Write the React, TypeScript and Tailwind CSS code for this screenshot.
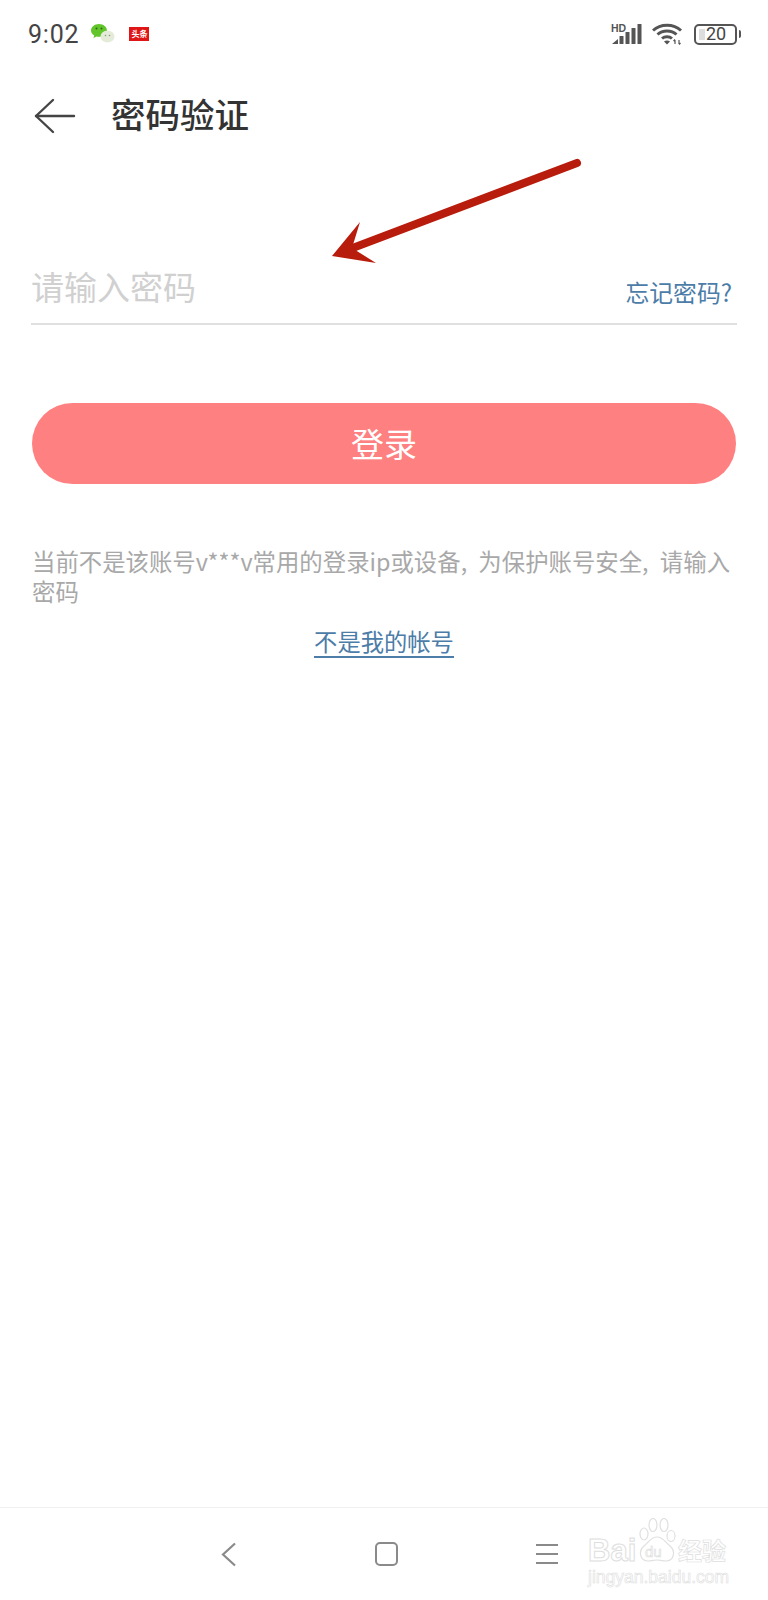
import React from 'react';

const cjk = 'font-["Noto_Sans_CJK_SC","Noto_Sans",sans-serif]';

const StatusBar = () => (
  <div className="flex h-[68px] items-center pl-[28px] pr-[27px]">
    <span className="text-[25px] leading-none text-[#444] font-['Roboto',sans-serif] tracking-[0.8px]">9:02</span>
    <svg className="ml-[12px]" width="24" height="22" viewBox="0 0 24 22">
      <path d="M8 1c4.400 0 8 2.900 8 6.400S12.400 13.800 8 13.800c-.9 0-1.700-.1-2.500-.3L2.500 15l.7-2.700C1.200 11.100 0 9.400 0 7.400 0 3.900 3.600 1 8 1z" fill="#63c52c" />
      <ellipse cx="16.500" cy="13.500" rx="7" ry="6" fill="#e4ecd9" />
      <circle cx="5.500" cy="5.500" r="1" fill="#2c6a10" />
      <circle cx="10.500" cy="5.500" r="1" fill="#2c6a10" />
      <circle cx="14.500" cy="12.500" r="0.800" fill="#8a9a80" />
      <circle cx="18.500" cy="12.500" r="0.800" fill="#8a9a80" />
    </svg>
    <span className={`ml-[14px] flex h-[14px] w-[20px] items-center justify-center bg-[#e01515] text-[8px] font-bold leading-none text-white ${cjk}`}>
      头条
    </span>
    <div className="ml-auto flex items-center">
      <svg width="31" height="22" viewBox="0 0 31 22">
        <text x="0" y="9" fontSize="10.500" fontWeight="700" fill="#555" fontFamily="Liberation Sans, sans-serif">HD</text>
        <path d="M1 21l6-5v5z" fill="#555" />
        <rect x="8.500" y="13" width="4" height="8" rx="0.500" fill="#555" />
        <rect x="14.500" y="9" width="4" height="12" rx="0.500" fill="#555" />
        <rect x="20.500" y="5" width="4" height="16" rx="0.500" fill="#555" />
        <rect x="26.500" y="1" width="4" height="20" rx="0.500" fill="#555" />
      </svg>
      <svg className="ml-[10px]" width="32" height="22" viewBox="0 0 32 22">
        <g fill="none" stroke="#555" strokeWidth="3">
          <path d="M1 7.500C8.500 .5 21.500 .5 29 7.500" />
          <path d="M5.500 11.500C10.500 6.800 19.500 6.800 24.500 11.500" />
          <path d="M10 15.500C12.800 13 17.200 13 20 15.500" />
        </g>
        <path d="M12 18.500c1.800-1.500 4.200-1.500 6 0L15 21.500z" fill="#555" />
        <path d="M23 21v-4M21.500 18l1.500-1.500M27 17v4M28.500 20L27 21.500" stroke="#555" strokeWidth="1.200" fill="none" />
      </svg>
      <div className="ml-[10px] flex h-[21px] w-[43px] items-center rounded-[5px] border-[2.500px] border-[#555] pl-[3px]">
        <span className="h-[11px] w-[6px] bg-[#ddd]" />
        <span className="ml-[1px] text-[18px] leading-none text-[#444] font-['Roboto',sans-serif]">20</span>
      </div>
      <span className="ml-[2px] h-[8px] w-[2px] rounded-r-sm bg-[#555]" />
    </div>
  </div>
);

const Header = () => (
  <div className="flex h-[96px] items-center pl-[34px]">
    <svg width="42" height="36" viewBox="0 0 42 36" fill="none" stroke="#444" strokeWidth="2.400" strokeLinecap="round" strokeLinejoin="round">
      <path d="M19 2L2 18l17 16" />
      <path d="M2 18h38" />
    </svg>
    <h1 className={`ml-[35px] pb-[6px] text-[34.500px] leading-none font-medium text-[#333] ${cjk}`}>密码验证</h1>
  </div>
);

const NavBar = () => (
  <div className="relative mt-auto flex h-[93px] items-start border-t border-[#f0f0f0] pt-[34px]">
    <svg className="ml-[221px]" width="16" height="25" viewBox="0 0 16 25" fill="none" stroke="#8a8a8a" strokeWidth="2.200">
      <path d="M14 1.500L2 12.500l12 11" />
    </svg>
    <div className="ml-[138px] h-[24px] w-[23px] rounded-[5px] border-[2.500px] border-[#8a8a8a]" />
    <div className="ml-[138px] mt-[2px] flex h-[20px] w-[22px] flex-col justify-between">
      <span className="h-[2px] bg-[#8a8a8a]" />
      <span className="h-[2px] bg-[#8a8a8a]" />
      <span className="h-[2px] bg-[#8a8a8a]" />
    </div>

    {/* baidu watermark */}
    <div className="absolute left-[588px] top-[10px] h-[70px] w-[140px]">
      <span className="absolute left-0 top-[17px] text-[31px] font-bold leading-none text-transparent [-webkit-text-stroke:1px_#dedede] font-['Liberation_Sans',sans-serif]">Bai</span>
      <svg className="absolute left-[47px] top-0" width="44" height="46" viewBox="0 0 44 46" fill="none" stroke="#e0e0e0" strokeWidth="1.200">
        <ellipse cx="9" cy="16" rx="4" ry="6" />
        <ellipse cx="18" cy="7" rx="4" ry="6.500" />
        <ellipse cx="29" cy="7" rx="4" ry="6.500" />
        <ellipse cx="36" cy="18" rx="4" ry="5.500" />
        <path d="M22 19c-6 0-8 5-13 9-6 5-4 15 4 15 4 0 6-1 9-1s5 1 9 1c8 0 10-10 4-15-5-4-7-9-13-9z" />
      </svg>
      <span className="absolute left-[57px] top-[26px] text-[15px] leading-none text-transparent [-webkit-text-stroke:0.7px_#dedede] font-['Liberation_Sans',sans-serif]">du</span>
      <span className={`absolute left-[90px] top-[20px] text-[24px] font-bold leading-none text-transparent [-webkit-text-stroke:0.7px_#dedede] ${cjk}`}>经验</span>
      <span className="absolute left-0 top-[51px] whitespace-nowrap text-[17.500px] leading-none text-transparent [-webkit-text-stroke:0.6px_#dedede] font-['Liberation_Sans',sans-serif]">jingyan.baidu.com</span>
    </div>
  </div>
);

export default function App() {
  return (
    <div className={`relative flex min-h-[1600px] w-[768px] flex-col bg-white ${cjk}`}>
      <StatusBar />
      <Header />

      <div className="mx-[31px] mt-[100px] flex h-[61px] items-start justify-between border-b-2 border-[#e0e0e0]">
        <span className="text-[33px] leading-[44px] text-[#d0d0d0]">请输入密码</span>
        <span className="mr-[5px] mt-[12px] text-[23.800px] leading-[32px] text-[#4c7ca8]">忘记密码?</span>
      </div>

      <button className="mx-[32px] mt-[78px] flex h-[81px] items-center justify-center rounded-full bg-[#ff8080] text-[33px] text-white">
        登录
      </button>

      <p className="mx-[32px] mt-[62px] text-[23.400px] leading-[30px] text-[#a8a8a8] [word-spacing:6px]">
        当前不是该账号v***v常用的登录ip或设备, 为保护账号安全, 请输入密码
      </p>

      <div className="mt-[20px] flex justify-center">
        <a className="border-b-2 border-[#4c7ca8] text-[23.300px] leading-[30px] text-[#4c7ca8]">不是我的帐号</a>
      </div>

      <NavBar />

      {/* red annotation arrow over the page */}
      <svg className="absolute left-0 top-0" width="768" height="300" viewBox="0 0 768 300">
        <path d="M577 163L350 249" stroke="#b81c0c" strokeWidth="8" strokeLinecap="round" fill="none" />
        <path d="M332 256L360 222L352 248L376 263z" fill="#b81c0c" />
      </svg>
    </div>
  );
}
